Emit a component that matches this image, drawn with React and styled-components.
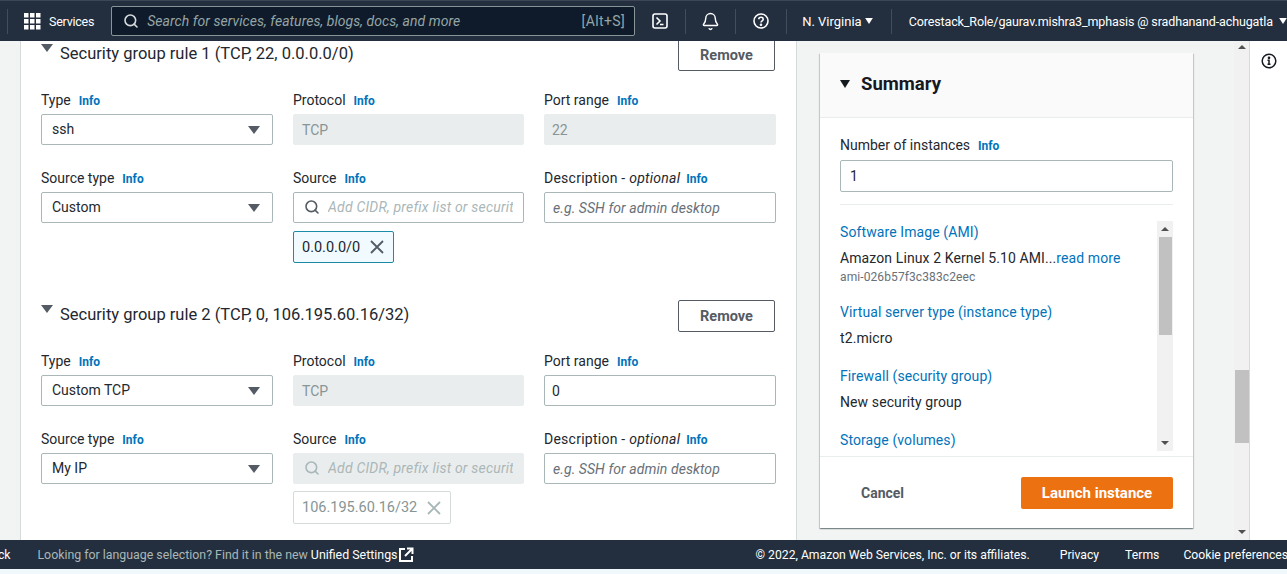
import React from 'react';
import styled, { createGlobalStyle } from 'styled-components';
import { Search, Bell } from 'lucide-react';

const GlobalStyle = createGlobalStyle`
  html, body {
    margin: 0;
    padding: 0;
    background: #f1f8fc;
    overflow: hidden;
  }
  * { box-sizing: border-box; }
  body {
    font-family: Roboto, "Noto Sans", "Liberation Sans", sans-serif;
    font-size: 14px;
    color: #23272e;
  }
`;

const Page = styled.div`
  width: 1287px;
  height: 574px;
  display: flex;
  flex-direction: column;
  overflow: hidden;
`;

/* top nav */
const Nav = styled.header`
  height: 41px;
  flex: none;
  display: flex;
  align-items: center;
  background: #232f3e;
  border-top: 1px solid #3c4654;
  color: #fff;
  white-space: nowrap;
  overflow: hidden;
`;
const NavDivider = styled.span`
  width: 1px;
  height: 25px;
  background: #414d5c;
  flex: none;
  margin: ${p => p.$margin || '0'};
`;
const NavText = styled.span`
  font-size: ${p => p.$size || 13}px;
  letter-spacing: ${p => p.$spacing || 0}px;
  color: #fff;
  flex: none;
  margin: ${p => p.$margin || '0'};
`;
const SearchBox = styled.div`
  width: 524px;
  height: 30px;
  flex: none;
  margin-left: 17px;
  display: flex;
  align-items: center;
  padding: 0 9px 0 11px;
  background: #0f1b2a;
  border: 1px solid #879596;
  border-radius: 2px;
`;
const SearchText = styled.span`
  flex: 1;
  margin-left: 8px;
  font-size: 14px;
  letter-spacing: 0.06px;
  font-style: italic;
  color: #95a5a6;
`;
const Shortcut = styled.span`
  font-size: 14px;
  letter-spacing: 0.4px;
  color: #95a5a6;
`;
const NavIconSlot = styled.span`
  width: ${p => p.$width}px;
  flex: none;
  display: flex;
  justify-content: center;
  color: #fff;
`;

/* body */
const Body = styled.div`
  flex: 1;
  min-height: 0;
  display: flex;
  background: #f2f3f3;
`;
const Gutter = styled.div`
  width: 20px;
  flex: none;
`;
const FormCard = styled.main`
  width: 777px;
  flex: none;
  background: #fff;
  border-left: 1px solid #d5dbdb;
  border-right: 1px solid #d5dbdb;
  padding: 0 20px;
  overflow: hidden;
`;
const Rule = styled.section`
  margin-top: ${p => p.$top}px;
  margin-bottom: 37px;
`;
const RuleHead = styled.div`
  height: 32px;
  display: flex;
  align-items: center;
  margin-bottom: 20px;
`;
const RuleCaret = styled.span`
  width: 0;
  height: 0;
  flex: none;
  margin: -14px 7px 0 0;
  border-left: 6px solid transparent;
  border-right: 6px solid transparent;
  border-top: 8px solid #545b64;
`;
const RuleTitle = styled.h3`
  flex: 1;
  margin: 0;
  padding-bottom: 4px;
  font-size: 16.5px;
  font-weight: 400;
  color: #23272e;
`;
const RemoveButton = styled.button`
  width: 97px;
  height: 32px;
  margin-right: 1px;
  background: #fff;
  border: 1px solid #545b64;
  border-radius: 2px;
  font: 700 14.5px Roboto, sans-serif;
  color: #545b64;
`;
const FieldGrid = styled.div`
  display: grid;
  grid-template-columns: 232px 231px 232px;
  column-gap: 20px;
  row-gap: 24px;
`;
const Field = styled.div`
  min-width: 0;
`;
const Label = styled.div`
  height: 18px;
  line-height: 18px;
  margin-bottom: 5px;
  font-size: 14px;
  color: #23272e;
  white-space: nowrap;

  em { font-style: italic; }
`;
const DescriptionLabel = styled(Label)`
  letter-spacing: 0.25px;
`;
const Info = styled.span`
  margin-left: ${p => p.$left || 8}px;
  font-size: 12px;
  letter-spacing: 0;
  font-weight: 700;
  color: #0073bb;
`;
const Control = styled.div`
  height: 31px;
  display: flex;
  align-items: center;
  padding: 0 ${p => p.$pad || 10}px ${p => (p.$pad ? 0 : 2)}px;
  font-size: 14px;
  white-space: nowrap;
  overflow: hidden;
  border-radius: 2px;
  border: 1px solid ${p => (p.$disabled ? '#eaeded' : '#aab7b8')};
  background: ${p => (p.$disabled ? '#eaeded' : '#fff')};
  color: ${p => (p.$disabled ? '#879596' : '#23272e')};
`;
const SelectCaret = styled.span`
  width: 0;
  height: 0;
  margin-left: auto;
  margin-right: 2px;
  margin-top: 2px;
  border-left: 6px solid transparent;
  border-right: 6px solid transparent;
  border-top: 8px solid #545b64;
`;
const Placeholder = styled.span`
  font-style: italic;
  letter-spacing: ${p => p.$spacing || 0}px;
  color: ${p => (p.$faint ? '#aab7b8' : '#687078')};
  margin-left: ${p => p.$left || 0}px;
  overflow: hidden;
`;
const Token = styled.div`
  margin-top: ${p => p.$top}px;
  display: inline-flex;
  align-items: center;
  gap: 9px;
  height: ${p => (p.$disabled ? 33 : 32)}px;
  padding: 0 8px;
  font-size: 14.5px;
  border-radius: 2px;
  border: 1px solid ${p => (p.$disabled ? '#d5dbdb' : '#1b8ba6')};
  background: ${p => (p.$disabled ? '#fff' : '#f1faff')};
  color: ${p => (p.$disabled ? '#879596' : '#23272e')};
`;

/* right side */
const SideArea = styled.aside`
  width: 437px;
  flex: none;
  padding: 12px 0 0 23px;
  overflow: hidden;
`;
const SummaryCard = styled.div`
  width: 373px;
  height: 475px;
  display: flex;
  flex-direction: column;
  background: #fff;
  box-shadow: 0 1px 1px 0 rgba(0, 28, 36, 0.3), 1px 1px 1px 0 rgba(0, 28, 36, 0.15), -1px 1px 1px 0 rgba(0, 28, 36, 0.15);
`;
const SummaryHead = styled.div`
  height: 65px;
  flex: none;
  display: flex;
  align-items: center;
  gap: 11px;
  padding: 0 20px 2px;
  background: #fafafa;
  border-bottom: 1px solid #eaeded;
`;
const SummaryCaret = styled.span`
  width: 0;
  height: 0;
  border-left: 5px solid transparent;
  border-right: 5px solid transparent;
  border-top: 8px solid #16191f;
`;
const SummaryTitle = styled.h2`
  margin: 0;
  font-size: 18.5px;
  font-weight: 700;
  color: #16191f;
`;
const CountSection = styled.div`
  margin: 17px 20px 0;
  padding-bottom: 12px;
  border-bottom: 1px solid #eaeded;
`;
const CountLabel = styled(Label)`
  margin-bottom: 5px;
  line-height: 20px;
  height: 20px;
`;
const CountInput = styled(Control)`
  height: 32px;
`;
const DetailWrap = styled.div`
  height: 230px;
  flex: none;
  margin: 16px 20px 0;
  display: flex;
`;
const DetailList = styled.div`
  flex: 1;
  overflow: hidden;
  letter-spacing: 0.1px;
`;
const DetailHeading = styled.div`
  line-height: 22px;
  font-size: 14px;
  color: #0073bb;
`;
const DetailValue = styled.div`
  line-height: 22px;
  margin-top: 4px;
  margin-bottom: ${p => p.$bottom}px;
  font-size: 14px;
  color: #23272e;

  span { color: #0073bb; }
`;
const DetailId = styled.div`
  font-size: 12px;
  line-height: 16px;
  margin-bottom: 16px;
  color: #687078;
`;
const ScrollTrack = styled.div`
  width: ${p => p.$width}px;
  flex: none;
  display: flex;
  flex-direction: column;
  align-items: center;
  background: #f1f1f1;
`;
const ScrollArrow = styled.span`
  width: 0;
  height: 0;
  flex: none;
  margin: ${p => p.$margin};
  border-left: 4px solid transparent;
  border-right: 4px solid transparent;
  ${p => (p.$up ? 'border-bottom: 4px solid #505050;' : 'border-top: 4px solid #505050;')}
`;
const ScrollThumb = styled.div`
  width: ${p => p.$width}px;
  height: ${p => p.$height}px;
  flex: none;
  margin-top: ${p => p.$top}px;
  margin-bottom: auto;
  background: #c1c1c1;
`;
const SummaryFoot = styled.div`
  flex: 1;
  display: flex;
  align-items: center;
  justify-content: space-between;
  padding: 0 20px 0 41px;
  border-top: 1px solid #eaeded;
  margin-top: 5px;
`;
const CancelLink = styled.span`
  font-size: 14px;
  font-weight: 700;
  color: #545b64;
`;
const LaunchButton = styled.button`
  width: 152px;
  height: 32px;
  background: #ec7211;
  border: 0;
  border-radius: 2px;
  font: 700 15px Roboto, sans-serif;
  color: #fff;
`;
const MainScrollbar = styled(ScrollTrack)`
  margin-right: 0;
  border-right: 1px solid #d5dbdb;
`;
const HelpRail = styled.div`
  flex: 1;
  background: #fff;
  display: flex;
  justify-content: center;
  padding-top: 12px;
`;

/* footer */
const Footer = styled.footer`
  height: 29px;
  flex: none;
  margin-bottom: 5px;
  display: flex;
  align-items: center;
  background: #232f3e;
  color: #d5dbdb;
  font-size: 12.2px;
  white-space: nowrap;
  overflow: hidden;
`;
const FootText = styled.span`
  flex: none;
  margin-left: ${p => p.$left}px;
  font-size: ${p => p.$size || 12.2}px;
  color: ${p => (p.$muted ? '#aab7b8' : '#fff')};
  display: inline-flex;
  align-items: center;
`;

const GridIcon = () => (
  <svg width="17" height="17" viewBox="0 0 17 17" fill="#fff" style={{ marginLeft: 16, flex: 'none' }}>
    {[0, 6, 12].map(y => [0, 6, 12].map(x => <rect key={`${x}-${y}`} x={x} y={y} width="4.5" height="4.5" />))}
  </svg>
);
const TerminalIcon = () => (
  <svg width="16" height="16" viewBox="0 0 16 16" fill="none" stroke="#fff" strokeWidth="1.6">
    <rect x="1" y="1" width="14" height="14" rx="2" />
    <path d="M4.5 4.5 8 8l-3.5 3.5M8 11.5h3.5" />
  </svg>
);
const HelpIcon = () => (
  <svg width="16" height="16" viewBox="0 0 16 16" fill="none" stroke="#fff" strokeWidth="1.6">
    <circle cx="8" cy="8" r="7" />
    <path d="M5.8 6.2C5.8 5 6.8 4.2 8 4.2s2.2.8 2.2 2c0 1.6-2.2 1.7-2.2 3.4" />
    <circle cx="8" cy="11.8" r=".5" fill="#fff" />
  </svg>
);
const SmallCaret = () => (
  <svg width="8" height="6" viewBox="0 0 9 7" fill="#fff" style={{ flex: 'none' }}>
    <path d="M0 0h9L4.5 7z" />
  </svg>
);
const CloseIcon = ({ color }) => (
  <svg width="16" height="16" viewBox="0 0 16 16" fill="none" stroke={color} strokeWidth="1.8">
    <path d="M2 2l12 12M14 2 2 14" />
  </svg>
);
const ExternalIcon = () => (
  <svg width="15" height="15" viewBox="0 0 15 15" fill="none" stroke="#fff" strokeWidth="2" style={{ marginLeft: 1 }}>
    <path d="M6 2H1v12h12V9M8 1.5h5.500V7M13 2 6 9" />
  </svg>
);
const InfoCircle = () => (
  <svg width="16" height="16" viewBox="0 0 16 16" fill="none" stroke="#16191f" strokeWidth="1.5">
    <circle cx="8" cy="8" r="6.8" />
    <path d="M6.500 7.200H8v4M6.500 11.300h3" />
    <circle cx="8" cy="4.800" r=".6" fill="#16191f" />
  </svg>
);

const FieldLabel = ({ children }) => (
  <Label>
    {children}
    <Info>Info</Info>
  </Label>
);

const SecurityRule = ({ top, title, type, port, sourceType, token, locked }) => (
  <Rule $top={top}>
    <RuleHead>
      <RuleCaret />
      <RuleTitle>{title}</RuleTitle>
      <RemoveButton>Remove</RemoveButton>
    </RuleHead>
    <FieldGrid>
      <Field>
        <FieldLabel>Type</FieldLabel>
        <Control>
          {type}
          <SelectCaret />
        </Control>
      </Field>
      <Field>
        <FieldLabel>Protocol</FieldLabel>
        <Control $disabled $pad={8}>TCP</Control>
      </Field>
      <Field>
        <FieldLabel>Port range</FieldLabel>
        <Control $disabled={port === '22'} $pad={7}>{port}</Control>
      </Field>
      <Field>
        <FieldLabel>Source type</FieldLabel>
        <Control>
          {sourceType}
          <SelectCaret />
        </Control>
      </Field>
      <Field>
        <FieldLabel>Source</FieldLabel>
        <Control $disabled={locked}>
          <Search size={16} strokeWidth={2.4} color={locked ? '#aab7b8' : '#545b64'} style={{ flex: 'none' }} />
          <Placeholder $left={8} $spacing={0.2} $faint>Add CIDR, prefix list or security</Placeholder>
        </Control>
        <Token $top={locked ? 7 : 8} $disabled={locked}>
          {token}
          <CloseIcon color={locked ? '#aab7b8' : '#545b64'} />
        </Token>
      </Field>
      <Field>
        <DescriptionLabel>
          Description - <em>optional</em>
          <Info $left={6}>Info</Info>
        </DescriptionLabel>
        <Control $pad={8}>
          <Placeholder $spacing={0.08}>e.g. SSH for admin desktop</Placeholder>
        </Control>
      </Field>
    </FieldGrid>
  </Rule>
);

const App = () => (
  <Page>
    <GlobalStyle />
    <Nav>
      <NavDivider $margin="0 0 0 7px" />
      <GridIcon />
      <NavText $margin="0 0 0 8px" $size={12.5} $spacing={-0.25}>Services</NavText>
      <SearchBox>
        <Search size={16} strokeWidth={2.4} color="#d5dbdb" />
        <SearchText>Search for services, features, blogs, docs, and more</SearchText>
        <Shortcut>[Alt+S]</Shortcut>
      </SearchBox>
      <NavIconSlot $width={50}>
        <TerminalIcon />
      </NavIconSlot>
      <NavDivider />
      <NavIconSlot $width={49}>
        <Bell size={19} strokeWidth={1.8} />
      </NavIconSlot>
      <NavDivider />
      <NavIconSlot $width={50}>
        <HelpIcon />
      </NavIconSlot>
      <NavDivider />
      <NavText $margin="0 3px 0 15px">N. Virginia</NavText>
      <SmallCaret />
      <NavDivider $margin="0 0 0 18px" />
      <NavText $margin="0 6px 0 17px" $size={12.5} $spacing={-0.12}>Corestack_Role/gaurav.mishra3_mphasis @ sradhanand-achugatla</NavText>
      <SmallCaret />
    </Nav>
    <Body>
      <Gutter />
      <FormCard>
        <SecurityRule
          top={-2}
          title="Security group rule 1 (TCP, 22, 0.0.0.0/0)"
          type="ssh"
          port="22"
          sourceType="Custom"
          token="0.0.0.0/0"
        />
        <SecurityRule
          top={0}
          title="Security group rule 2 (TCP, 0, 106.195.60.16/32)"
          type="Custom TCP"
          port="0"
          sourceType="My IP"
          token="106.195.60.16/32"
          locked
        />
      </FormCard>
      <SideArea>
        <SummaryCard>
          <SummaryHead>
            <SummaryCaret />
            <SummaryTitle>Summary</SummaryTitle>
          </SummaryHead>
          <CountSection>
            <CountLabel>
              Number of instances
              <Info>Info</Info>
            </CountLabel>
            <CountInput $pad={9}>1</CountInput>
          </CountSection>
          <DetailWrap>
            <DetailList>
              <DetailHeading>Software Image (AMI)</DetailHeading>
              <DetailValue $bottom={0}>
                Amazon Linux 2 Kernel 5.10 AMI...<span>read more</span>
              </DetailValue>
              <DetailId>ami-026b57f3c383c2eec</DetailId>
              <DetailHeading>Virtual server type (instance type)</DetailHeading>
              <DetailValue $bottom={16}>t2.micro</DetailValue>
              <DetailHeading>Firewall (security group)</DetailHeading>
              <DetailValue $bottom={16}>New security group</DetailValue>
              <DetailHeading>Storage (volumes)</DetailHeading>
            </DetailList>
            <ScrollTrack $width={16}>
              <ScrollArrow $up $margin="6px 0 0" />
              <ScrollThumb $width={13} $height={98} $top={6} />
              <ScrollArrow $margin="0 0 6px" />
            </ScrollTrack>
          </DetailWrap>
          <SummaryFoot>
            <CancelLink>Cancel</CancelLink>
            <LaunchButton>Launch instance</LaunchButton>
          </SummaryFoot>
        </SummaryCard>
      </SideArea>
      <MainScrollbar $width={16}>
        <ScrollArrow $up $margin="4px 0 0" />
        <ScrollThumb $width={14} $height={73} $top={321} />
        <ScrollArrow $margin="0 0 6px" />
      </MainScrollbar>
      <HelpRail>
        <InfoCircle />
      </HelpRail>
    </Body>
    <Footer>
      <FootText $left={-42}>Feedback</FootText>
      <FootText $left={27} $size={12.35} $muted>Looking for language selection? Find it in the new&nbsp;</FootText>
      <FootText $left={0} $size={12.4}>
        Unified Settings
        <ExternalIcon />
      </FootText>
      <FootText $left={342}>© 2022, Amazon Web Services, Inc. or its affiliates.</FootText>
      <FootText $left={30}>Privacy</FootText>
      <FootText $left={26}>Terms</FootText>
      <FootText $left={24}>Cookie preferences</FootText>
    </Footer>
  </Page>
);

export default App;
